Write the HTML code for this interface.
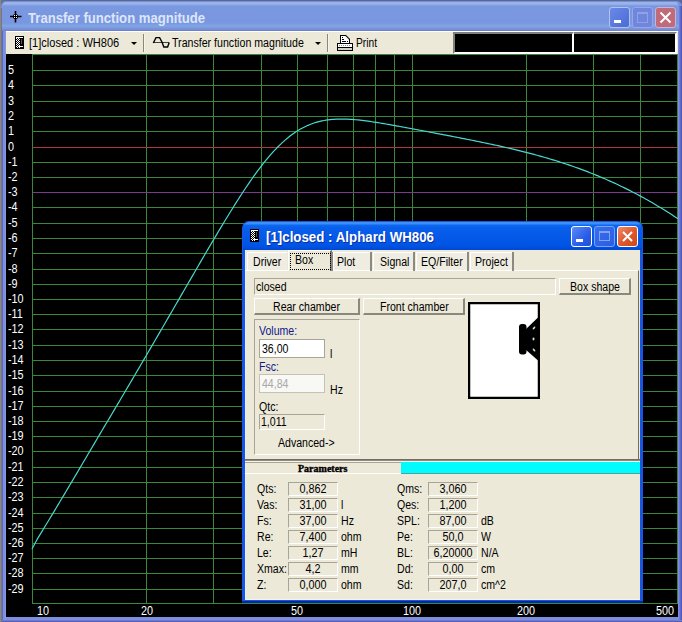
<!DOCTYPE html>
<html><head><meta charset="utf-8">
<style>
*{box-sizing:border-box}
body{margin:0;width:682px;height:622px;position:relative;overflow:hidden;background:#8a8680;font-family:"Liberation Sans", sans-serif;font-size:11px;color:#000}
.a{position:absolute}
.yl{position:absolute;left:8px;width:24px;text-align:left;color:#fff;font-size:12px;line-height:14px;transform:scaleX(0.9);transform-origin:0 0}
.xl{position:absolute;top:604px;width:40px;text-align:center;color:#fff;font-size:12px;line-height:14px;transform:scaleX(0.9)}
.t{position:absolute;white-space:pre;line-height:13px}
</style></head><body>
<!-- main window frame -->
<div class="a" style="left:1px;top:0;width:681px;height:1px;background:#5a6a98"></div><div class="a" style="left:1px;top:0;width:8px;height:8px;background:#6a7294"></div>
<div class="a" style="left:1px;top:0px;width:681px;height:622px;background:#7b8fe0;border-radius:6px 6px 0 0;border-top:1px solid #56699a"></div>
<div class="a" style="left:1px;top:8px;width:1px;height:614px;background:#747490"></div><div class="a" style="left:2px;top:8px;width:1px;height:614px;background:#6068b8"></div><div class="a" style="left:5px;top:31px;width:1px;height:591px;background:#8898e0"></div>
<div class="a" style="left:681px;top:6px;width:1px;height:616px;background:#5058b8"></div>
<div class="a" style="left:680px;top:6px;width:1px;height:616px;background:#6068c8"></div>
<div class="a" style="left:679px;top:6px;width:1px;height:616px;background:#7078d8"></div>
<div class="a" style="left:674px;top:0;width:8px;height:6px;background:#5a6490;z-index:-1"></div>
<div class="a" style="left:2px;top:621px;width:680px;height:1px;background:#5a60b0"></div>
<div class="a" style="left:2px;top:620px;width:680px;height:1px;background:#7078d0"></div>
<div class="a" style="left:2px;top:1px;width:677px;height:30px;border-radius:6px 6px 0 0;background:linear-gradient(#7c8ec8 0px,#7c8ec8 1px,#98b4ee 1px,#98b4ee 3px,#7a98e0 5px,#7996e0 22px,#80a6e4 25px,#7a92da 28px,#6a80c8 30px)"></div>
<div class="t" style="left:28px;top:10px;font-size:14px;font-weight:bold;color:#dce6f8;line-height:16px;transform:scaleX(0.937);transform-origin:0 0">Transfer function magnitude</div>
<!-- toolbar -->
<div class="a" style="left:6px;top:31px;width:672px;height:23px;background:#ece9d8;border-top:1px solid #fff"></div>
<!-- plot black -->
<div class="a" style="left:6px;top:54px;width:672px;height:563px;background:#000"></div>
<svg class="a" style="left:0;top:0" width="682" height="622" viewBox="0 0 682 622">
<rect x="146" y="54" width="1" height="549" fill="#3a863a"/><rect x="213" y="54" width="1" height="549" fill="#3a863a"/><rect x="261" y="54" width="1" height="549" fill="#3a863a"/><rect x="297" y="54" width="1" height="549" fill="#3a863a"/><rect x="327" y="54" width="1" height="549" fill="#3a863a"/><rect x="353" y="54" width="1" height="549" fill="#3a863a"/><rect x="375" y="54" width="1" height="549" fill="#3a863a"/><rect x="394" y="54" width="1" height="549" fill="#3a863a"/><rect x="412" y="54" width="1" height="549" fill="#3a863a"/><rect x="526" y="54" width="1" height="549" fill="#3a863a"/><rect x="593" y="54" width="1" height="549" fill="#3a863a"/><rect x="640" y="54" width="1" height="549" fill="#3a863a"/><rect x="32" y="70" width="646" height="1" fill="#3a863a"/><rect x="32" y="85" width="646" height="1" fill="#3a863a"/><rect x="32" y="101" width="646" height="1" fill="#3a863a"/><rect x="32" y="116" width="646" height="1" fill="#3a863a"/><rect x="32" y="131" width="646" height="1" fill="#3a863a"/><rect x="32" y="147" width="646" height="1" fill="#b03838"/><rect x="32" y="162" width="646" height="1" fill="#3a863a"/><rect x="32" y="177" width="646" height="1" fill="#3a863a"/><rect x="32" y="192" width="646" height="1" fill="#7e3890"/><rect x="32" y="207" width="646" height="1" fill="#3a863a"/><rect x="32" y="223" width="646" height="1" fill="#3a863a"/><rect x="32" y="238" width="646" height="1" fill="#3a863a"/><rect x="32" y="253" width="646" height="1" fill="#3a863a"/><rect x="32" y="269" width="646" height="1" fill="#3a863a"/><rect x="32" y="284" width="646" height="1" fill="#3a863a"/><rect x="32" y="299" width="646" height="1" fill="#3a863a"/><rect x="32" y="314" width="646" height="1" fill="#3a863a"/><rect x="32" y="329" width="646" height="1" fill="#3a863a"/><rect x="32" y="345" width="646" height="1" fill="#3a863a"/><rect x="32" y="360" width="646" height="1" fill="#3a863a"/><rect x="32" y="375" width="646" height="1" fill="#3a863a"/><rect x="32" y="391" width="646" height="1" fill="#3a863a"/><rect x="32" y="406" width="646" height="1" fill="#3a863a"/><rect x="32" y="421" width="646" height="1" fill="#3a863a"/><rect x="32" y="436" width="646" height="1" fill="#3a863a"/><rect x="32" y="451" width="646" height="1" fill="#3a863a"/><rect x="32" y="467" width="646" height="1" fill="#3a863a"/><rect x="32" y="482" width="646" height="1" fill="#3a863a"/><rect x="32" y="497" width="646" height="1" fill="#3a863a"/><rect x="32" y="513" width="646" height="1" fill="#3a863a"/><rect x="32" y="528" width="646" height="1" fill="#3a863a"/><rect x="32" y="543" width="646" height="1" fill="#3a863a"/><rect x="32" y="558" width="646" height="1" fill="#3a863a"/><rect x="32" y="573" width="646" height="1" fill="#3a863a"/><rect x="32" y="589" width="646" height="1" fill="#3a863a"/><rect x="32" y="54" width="646" height="1" fill="#3a863a"/><rect x="32" y="603" width="646" height="1" fill="#3a863a"/><rect x="32" y="54" width="1" height="550" fill="#3a863a"/><rect x="677" y="54" width="1" height="550" fill="#3a863a"/>
<polyline points="32.0,548.96 33.0,547.08 34.0,545.20 36.0,541.44 38.0,537.92 40.0,534.63 42.0,531.35 44.0,528.06 46.0,524.77 48.0,521.48 50.0,518.19 52.0,514.90 54.0,511.60 56.0,508.27 58.0,504.92 60.0,501.56 62.0,498.20 64.0,494.83 66.0,491.47 68.0,488.10 70.0,484.73 72.0,481.35 74.0,477.98 76.0,474.60 78.0,471.22 80.0,467.84 82.0,464.46 84.0,461.07 86.0,457.68 88.0,454.29 90.0,450.89 92.0,447.50 94.0,444.10 96.0,440.69 98.0,437.29 100.0,433.88 102.0,430.52 104.0,427.17 106.0,423.81 108.0,420.45 110.0,417.08 112.0,413.71 114.0,410.34 116.0,406.96 118.0,403.59 120.0,400.21 122.0,396.82 124.0,393.43 126.0,390.04 128.0,386.65 130.0,383.25 132.0,379.85 134.0,376.45 136.0,373.04 138.0,369.63 140.0,366.22 142.0,362.80 144.0,359.38 146.0,355.96 148.0,352.53 150.0,349.10 152.0,345.67 154.0,342.23 156.0,338.80 158.0,335.36 160.0,331.91 162.0,328.47 164.0,325.02 166.0,321.57 168.0,318.12 170.0,314.66 172.0,311.21 174.0,307.75 176.0,304.29 178.0,300.84 180.0,297.38 182.0,293.92 184.0,290.46 186.0,287.00 188.0,283.54 190.0,280.09 192.0,276.63 194.0,273.18 196.0,269.74 198.0,266.29 200.0,262.85 202.0,259.42 204.0,255.99 206.0,252.57 208.0,249.15 210.0,245.75 212.0,242.35 214.0,238.97 216.0,235.60 218.0,232.24 220.0,228.90 222.0,225.57 224.0,222.26 226.0,218.97 228.0,215.69 230.0,212.45 232.0,209.22 234.0,206.02 236.0,202.86 238.0,199.72 240.0,196.61 242.0,193.53 244.0,190.50 246.0,187.50 248.0,184.54 250.0,181.63 252.0,178.77 254.0,175.95 256.0,173.18 258.0,170.47 260.0,167.81 262.0,165.21 264.0,162.67 266.0,160.20 268.0,157.79 270.0,155.44 272.0,153.17 274.0,150.97 276.0,148.84 278.0,146.79 280.0,144.81 282.0,142.90 284.0,141.08 286.0,139.34 288.0,137.67 290.0,136.08 292.0,134.58 294.0,133.15 296.0,131.80 298.0,130.53 300.0,129.34 302.0,128.22 304.0,127.18 306.0,126.22 308.0,125.32 310.0,124.50 312.0,123.74 314.0,123.05 316.0,122.42 318.0,121.86 320.0,121.35 322.0,120.91 324.0,120.51 326.0,120.17 328.0,119.88 330.0,119.64 332.0,119.44 334.0,119.29 336.0,119.17 338.0,119.09 340.0,119.05 342.0,119.04 344.0,119.07 346.0,119.12 348.0,119.20 350.0,119.31 352.0,119.44 354.0,119.60 356.0,119.77 358.0,119.96 360.0,120.18 362.0,120.40 364.0,120.65 366.0,120.90 368.0,121.17 370.0,121.45 372.0,121.74 374.0,122.05 376.0,122.36 378.0,122.67 380.0,123.00 382.0,123.33 384.0,123.67 386.0,124.01 388.0,124.36 390.0,124.71 392.0,125.07 394.0,125.42 396.0,125.79 398.0,126.15 400.0,126.52 402.0,126.89 404.0,127.26 406.0,127.63 408.0,128.00 410.0,128.37 412.0,128.75 414.0,129.12 416.0,129.50 418.0,129.88 420.0,130.25 422.0,130.63 424.0,131.01 426.0,131.39 428.0,131.77 430.0,132.15 432.0,132.53 434.0,132.91 436.0,133.29 438.0,133.67 440.0,134.05 442.0,134.43 444.0,134.81 446.0,135.19 448.0,135.58 450.0,135.96 452.0,136.35 454.0,136.73 456.0,137.12 458.0,137.51 460.0,137.90 462.0,138.29 464.0,138.68 466.0,139.08 468.0,139.47 470.0,139.87 472.0,140.27 474.0,140.67 476.0,141.08 478.0,141.48 480.0,141.89 482.0,142.30 484.0,142.72 486.0,143.14 488.0,143.56 490.0,143.98 492.0,144.41 494.0,144.84 496.0,145.27 498.0,145.71 500.0,146.16 502.0,146.60 504.0,147.05 506.0,147.51 508.0,147.97 510.0,148.43 512.0,148.90 514.0,149.38 516.0,149.86 518.0,150.34 520.0,150.84 522.0,151.33 524.0,151.83 526.0,152.34 528.0,152.86 530.0,153.38 532.0,153.91 534.0,154.44 536.0,154.98 538.0,155.53 540.0,156.09 542.0,156.65 544.0,157.22 546.0,157.79 548.0,158.38 550.0,158.97 552.0,159.57 554.0,160.18 556.0,160.80 558.0,161.42 560.0,162.06 562.0,162.70 564.0,163.35 566.0,164.01 568.0,164.68 570.0,165.36 572.0,166.05 574.0,166.75 576.0,167.46 578.0,168.17 580.0,168.90 582.0,169.64 584.0,170.39 586.0,171.14 588.0,171.91 590.0,172.69 592.0,173.48 594.0,174.28 596.0,175.09 598.0,175.91 600.0,176.75 602.0,177.59 604.0,178.45 606.0,179.31 608.0,180.19 610.0,181.08 612.0,181.98 614.0,182.90 616.0,183.82 618.0,184.76 620.0,185.71 622.0,186.67 624.0,187.64 626.0,188.63 628.0,189.63 630.0,190.64 632.0,191.66 634.0,192.70 636.0,193.75 638.0,194.81 640.0,195.88 642.0,196.97 644.0,198.07 646.0,199.18 648.0,200.31 650.0,201.45 652.0,202.60 654.0,203.76 656.0,204.94 658.0,206.14 660.0,207.34 662.0,208.56 664.0,209.79 666.0,211.04 668.0,212.29 670.0,213.57 672.0,214.85 674.0,216.15 676.0,217.47 678.0,218.79" fill="none" stroke="#4ad8d0" stroke-width="1.2"/>
</svg>
<div class="yl" style="top:63px">5</div><div class="yl" style="top:78px">4</div><div class="yl" style="top:94px">3</div><div class="yl" style="top:109px">2</div><div class="yl" style="top:124px">1</div><div class="yl" style="top:140px">0</div><div class="yl" style="top:155px">-1</div><div class="yl" style="top:170px">-2</div><div class="yl" style="top:185px">-3</div><div class="yl" style="top:200px">-4</div><div class="yl" style="top:216px">-5</div><div class="yl" style="top:231px">-6</div><div class="yl" style="top:246px">-7</div><div class="yl" style="top:262px">-8</div><div class="yl" style="top:277px">-9</div><div class="yl" style="top:292px">-10</div><div class="yl" style="top:307px">-11</div><div class="yl" style="top:322px">-12</div><div class="yl" style="top:338px">-13</div><div class="yl" style="top:353px">-14</div><div class="yl" style="top:368px">-15</div><div class="yl" style="top:384px">-16</div><div class="yl" style="top:399px">-17</div><div class="yl" style="top:414px">-18</div><div class="yl" style="top:429px">-19</div><div class="yl" style="top:444px">-20</div><div class="yl" style="top:460px">-21</div><div class="yl" style="top:475px">-22</div><div class="yl" style="top:490px">-23</div><div class="yl" style="top:506px">-24</div><div class="yl" style="top:521px">-25</div><div class="yl" style="top:536px">-26</div><div class="yl" style="top:551px">-27</div><div class="yl" style="top:566px">-28</div><div class="yl" style="top:582px">-29</div>
<div class="xl" style="left:23px">10</div><div class="xl" style="left:127px">20</div><div class="xl" style="left:277px">50</div><div class="xl" style="left:392px">100</div><div class="xl" style="left:506px">200</div><div class="xl" style="left:645px">500</div>

<svg class="a" style="left:9px;top:10px" width="14" height="14" viewBox="0 0 14 14">
<path d="M6.5 1V12.5M1 6.5H12.5" stroke="#000" stroke-width="1.6"/>
<circle cx="6.5" cy="6.5" r="2.6" fill="#000"/><rect x="5" y="5" width="1" height="1" fill="#fff"/><rect x="7" y="7" width="1" height="1" fill="#fff"/><rect x="7" y="5" width="1" height="1" fill="#fff"/><rect x="5" y="7" width="1" height="1" fill="#fff"/></svg>
<div class="a" style="left:609px;top:7px;width:21px;height:21px;border:1px solid #b4c2f2;border-radius:3px;background:linear-gradient(135deg,#6a8ae8,#4a6ad6)"></div>
<div class="a" style="left:614px;top:20px;width:7px;height:3px;background:#fff"></div>
<div class="a" style="left:632px;top:7px;width:21px;height:21px;border:1px solid #97a8ea;border-radius:3px;background:#6f86dc"></div>
<div class="a" style="left:637px;top:12px;width:11px;height:11px;border:1px solid #8fa2e6;border-top-width:2px"></div>
<div class="a" style="left:655px;top:7px;width:21px;height:21px;border:1px solid #c8b4d8;border-radius:3px;background:#c06a7a"></div>
<svg class="a" style="left:659px;top:11px" width="13" height="13" viewBox="0 0 13 13"><path d="M1.5 1.5L11.5 11.5M11.5 1.5L1.5 11.5" stroke="#fff" stroke-width="2"/></svg>
<svg class="a" style="left:15px;top:36px" width="9" height="13" viewBox="0 0 9 13">
<defs><pattern id="chk15" width="2" height="2" patternUnits="userSpaceOnUse"><rect width="2" height="2" fill="#fff"/><rect width="1" height="1" fill="#000"/><rect x="1" y="1" width="1" height="1" fill="#000"/></pattern></defs>
<rect width="9" height="13" fill="#000"/><rect x="1" y="1" width="4" height="11" fill="url(#chk15)"/><rect x="1" y="1" width="7" height="1" fill="#fff"/><rect x="4" y="10" width="4" height="1" fill="#fff"/><rect x="6" y="3" width="1" height="5" fill="#555"/></svg>
<div class="t" style="left:29px;top:37px;font-size:12px;color:#000;font-weight:normal;transform:scaleX(0.92);transform-origin:0 0">[1]closed : WH806</div>
<div class="a" style="left:131px;top:42px;width:0;height:0;border-left:3px solid transparent;border-right:3px solid transparent;border-top:3px solid #000"></div>
<div class="a" style="left:143px;top:34px;width:1px;height:18px;background:#8a887c"></div><div class="a" style="left:144px;top:34px;width:1px;height:18px;background:#f6f4ec"></div>
<svg class="a" style="left:152px;top:36px" width="18" height="13" viewBox="0 0 18 13">
<rect x="1" y="6" width="16" height="1" fill="#404040"/>
<path d="M1.3 7L4 1.6L7.6 1.6L10.2 6.5L11.8 11L15.6 11L17.2 6.5" fill="none" stroke="#000" stroke-width="1.4"/></svg>
<div class="t" style="left:172px;top:37px;font-size:12px;color:#000;font-weight:normal;transform:scaleX(0.885);transform-origin:0 0">Transfer function magnitude</div>
<div class="a" style="left:315px;top:42px;width:0;height:0;border-left:3px solid transparent;border-right:3px solid transparent;border-top:3px solid #000"></div>
<div class="a" style="left:327px;top:34px;width:1px;height:18px;background:#8a887c"></div><div class="a" style="left:328px;top:34px;width:1px;height:18px;background:#f6f4ec"></div>
<svg class="a" style="left:337px;top:35px" width="16" height="16" viewBox="0 0 16 16">
<path d="M3 0H9L13 4V8H3Z" fill="#000"/><path d="M4 1H8.5L12 4.5V8H4Z" fill="#fff"/>
<rect x="5" y="2" width="1" height="1" fill="#000"/><rect x="5" y="4" width="2" height="1" fill="#000"/><rect x="5" y="6" width="4" height="1" fill="#000"/><rect x="10" y="6" width="1" height="1" fill="#000"/>
<rect x="0" y="8" width="16" height="8" fill="#000"/><rect x="1" y="9" width="14" height="3" fill="#fff"/>
<rect x="2" y="10" width="1" height="1" fill="#888"/><rect x="4" y="10" width="1" height="1" fill="#888"/><rect x="6" y="10" width="1" height="1" fill="#888"/><rect x="8" y="10" width="1" height="1" fill="#888"/><rect x="10" y="10" width="1" height="1" fill="#888"/><rect x="12" y="10" width="1" height="1" fill="#888"/>
<rect x="1" y="13" width="14" height="2" fill="#d0d0c8"/></svg>
<div class="t" style="left:356px;top:37px;font-size:12px;color:#000;font-weight:normal;transform:scaleX(0.85);transform-origin:0 0">Print</div>
<div class="a" style="left:453px;top:32px;width:121px;height:22px;background:#000;border-top:2px solid #808080;border-left:2px solid #808080;border-bottom:2px solid #fff;border-right:2px solid #fff"></div>
<div class="a" style="left:574px;top:32px;width:103px;height:22px;background:#000;border-top:2px solid #808080;border-bottom:2px solid #fff;border-right:2px solid #fff"></div>
<div class="a" style="left:242px;top:221px;width:401px;height:382px;background:#1656e2;border-radius:7px 7px 0 0"></div><div class="a" style="left:242px;top:601px;width:401px;height:2px;background:#0426a8"></div>
<div class="a" style="left:243px;top:222px;width:399px;height:28px;border-radius:6px 6px 0 0;background:linear-gradient(#3d8ef8 0px,#3d8ef8 2px,#0a6af0 3px,#0a5eec 6px,#0054e4 24px,#0046d4 28px)"></div>
<div class="a" style="left:245px;top:250px;width:395px;height:350px;background:#ece9d8;border-bottom:1px solid #f4f4f0"></div>
<div class="a" style="left:245px;top:250px;width:1px;height:350px;background:#e4f0fc"></div>
<svg class="a" style="left:250px;top:229px" width="9" height="13" viewBox="0 0 9 13">
<defs><pattern id="chk250" width="2" height="2" patternUnits="userSpaceOnUse"><rect width="2" height="2" fill="#fff"/><rect width="1" height="1" fill="#000"/><rect x="1" y="1" width="1" height="1" fill="#000"/></pattern></defs>
<rect width="9" height="13" fill="#000"/><rect x="1" y="1" width="4" height="11" fill="url(#chk250)"/><rect x="1" y="1" width="7" height="1" fill="#fff"/><rect x="4" y="10" width="4" height="1" fill="#fff"/><rect x="6" y="3" width="1" height="5" fill="#555"/></svg>
<div class="t" style="left:266px;top:229px;font-size:14px;color:#fff;font-weight:bold;line-height:17px;transform:scaleX(0.95);transform-origin:0 0;text-shadow:1px 1px 0 #0a2ea0">[1]closed : Alphard WH806</div>
<div class="a" style="left:571px;top:226px;width:21px;height:21px;border:1px solid #fff;border-radius:3px;background:linear-gradient(135deg,#5a8cf8,#2a5ee8 60%,#2050d8)"></div>
<div class="a" style="left:576px;top:239px;width:7px;height:3px;background:#fff"></div>
<div class="a" style="left:594px;top:226px;width:21px;height:21px;border:1px solid #7ea2f4;border-radius:3px;background:linear-gradient(135deg,#3a6ef0,#2a5ee0)"></div>
<div class="a" style="left:599px;top:231px;width:11px;height:10px;border:1px solid #7ea2f4;border-top-width:2px"></div>
<div class="a" style="left:617px;top:226px;width:21px;height:21px;border:1px solid #fff;border-radius:3px;background:linear-gradient(135deg,#f08a6a,#e05a30 50%,#c84818)"></div>
<svg class="a" style="left:621px;top:230px" width="13" height="13" viewBox="0 0 13 13"><path d="M2 2L11 11M11 2L2 11" stroke="#fff" stroke-width="2"/></svg>
<div class="a" style="left:245px;top:270px;width:394px;height:190px;border-top:1px solid #fff;border-right:1px solid #716f64"></div>
<div class="a" style="left:288px;top:250px;width:44px;height:21px;background:#ece9d8;border-top:1px solid #fff;border-left:1px solid #fff;border-right:2px solid #716f64"></div>
<div class="a" style="left:290px;top:253px;width:41px;height:17px;border:1px dotted #000"></div>
<div class="a" style="left:247px;top:252px;width:40px;height:18px;border-top:1px solid #fff;border-left:1px solid #fff;background:#efede2"></div>
<div class="a" style="left:333px;top:252px;width:37px;height:18px;border-top:1px solid #fff;border-left:1px solid #fff;background:#efede2"></div>
<div class="a" style="left:373px;top:252px;width:40px;height:18px;border-top:1px solid #fff;border-left:1px solid #fff;background:#efede2"></div>
<div class="a" style="left:416px;top:252px;width:51px;height:18px;border-top:1px solid #fff;border-left:1px solid #fff;background:#efede2"></div>
<div class="a" style="left:470px;top:252px;width:42px;height:18px;border-top:1px solid #fff;border-left:1px solid #fff;background:#efede2"></div>
<div class="a" style="left:331px;top:252px;width:2px;height:19px;background:#8c8a80"></div>
<div class="a" style="left:370px;top:252px;width:2px;height:19px;background:#8c8a80"></div>
<div class="a" style="left:413px;top:252px;width:2px;height:19px;background:#8c8a80"></div>
<div class="a" style="left:467px;top:252px;width:2px;height:19px;background:#8c8a80"></div>
<div class="a" style="left:512px;top:252px;width:2px;height:19px;background:#8c8a80"></div>
<div class="t" style="left:253px;top:256px;font-size:12px;color:#000;font-weight:normal;transform:scaleX(0.88);transform-origin:0 0;">Driver</div>
<div class="t" style="left:295px;top:254px;font-size:12px;color:#000;font-weight:normal;transform:scaleX(0.88);transform-origin:0 0;">Box</div>
<div class="t" style="left:337px;top:256px;font-size:12px;color:#000;font-weight:normal;transform:scaleX(0.88);transform-origin:0 0;">Plot</div>
<div class="t" style="left:380px;top:256px;font-size:12px;color:#000;font-weight:normal;transform:scaleX(0.88);transform-origin:0 0;">Signal</div>
<div class="t" style="left:421px;top:256px;font-size:12px;color:#000;font-weight:normal;transform:scaleX(0.88);transform-origin:0 0;">EQ/Filter</div>
<div class="t" style="left:475px;top:256px;font-size:12px;color:#000;font-weight:normal;transform:scaleX(0.88);transform-origin:0 0;">Project</div>
<div class="a" style="left:254px;top:278px;width:302px;height:17px;border-top:1px solid #a8a598;border-left:1px solid #a8a598;border-bottom:1px solid #fff;border-right:1px solid #fff"></div>
<div class="t" style="left:256px;top:281px;font-size:12px;color:#000;font-weight:normal;transform:scaleX(0.88);transform-origin:0 0;">closed</div>
<div class="a" style="left:559px;top:278px;width:72px;height:17px;background:#ece9d8;border-top:1px solid #fff;border-left:1px solid #fff;border-bottom:2px solid #8a887c;border-right:2px solid #8a887c"></div><div class="t" style="left:570px;top:281px;font-size:12px;color:#000;font-weight:normal;transform:scaleX(0.88);transform-origin:0 0;">Box shape</div>
<div class="a" style="left:254px;top:298px;width:106px;height:17px;background:#ece9d8;border-top:1px solid #fff;border-left:1px solid #fff;border-bottom:2px solid #8a887c;border-right:2px solid #8a887c"></div><div class="t" style="left:273px;top:301px;font-size:12px;color:#000;font-weight:normal;transform:scaleX(0.88);transform-origin:0 0;">Rear chamber</div>
<div class="a" style="left:363px;top:298px;width:102px;height:17px;background:#ece9d8;border-top:1px solid #fff;border-left:1px solid #fff;border-bottom:2px solid #8a887c;border-right:2px solid #8a887c"></div><div class="t" style="left:380px;top:301px;font-size:12px;color:#000;font-weight:normal;transform:scaleX(0.88);transform-origin:0 0;">Front chamber</div>
<div class="a" style="left:254px;top:319px;width:106px;height:136px;border-top:1px solid #a8a598;border-left:1px solid #a8a598;border-bottom:1px solid #fff;border-right:1px solid #fff"></div>
<div class="t" style="left:259px;top:325px;font-size:12px;color:#10188a;font-weight:normal;transform:scaleX(0.88);transform-origin:0 0;">Volume:</div>
<div class="a" style="left:259px;top:339px;width:66px;height:19px;background:#fff;border:1px solid #a8a598"></div>
<div class="t" style="left:262px;top:343px;font-size:12px;color:#000;font-weight:normal;transform:scaleX(0.88);transform-origin:0 0;">36,00</div>
<div class="t" style="left:330px;top:348px;font-size:12px;color:#000;font-weight:normal;transform:scaleX(0.88);transform-origin:0 0;">l</div>
<div class="t" style="left:259px;top:361px;font-size:12px;color:#10188a;font-weight:normal;transform:scaleX(0.88);transform-origin:0 0;">Fsc:</div>
<div class="a" style="left:259px;top:374px;width:66px;height:19px;background:#f8f8f4;border:1px solid #c4c2b8"></div>
<div class="t" style="left:262px;top:378px;font-size:12px;color:#a8a8a8;font-weight:normal;transform:scaleX(0.88);transform-origin:0 0;">44,84</div>
<div class="t" style="left:330px;top:384px;font-size:12px;color:#000;font-weight:normal;transform:scaleX(0.88);transform-origin:0 0;">Hz</div>
<div class="t" style="left:259px;top:401px;font-size:12px;color:#000;font-weight:normal;transform:scaleX(0.88);transform-origin:0 0;">Qtc:</div>
<div class="a" style="left:259px;top:414px;width:66px;height:16px;background:#ece9d8;border-top:1px solid #a8a598;border-left:1px solid #a8a598;border-bottom:1px solid #fff;border-right:1px solid #fff"></div>
<div class="t" style="left:261px;top:416px;font-size:12px;color:#000;font-weight:normal;transform:scaleX(0.88);transform-origin:0 0;">1,011</div>
<div class="t" style="left:278px;top:437px;font-size:12px;color:#000;font-weight:normal;transform:scaleX(0.88);transform-origin:0 0;">Advanced-&gt;</div>
<svg class="a" style="left:468px;top:302px" width="72" height="97" viewBox="0 0 72 97">
<rect x="1" y="1" width="70" height="95" fill="#fff" stroke="#000" stroke-width="2.5"/>
<rect x="51" y="22" width="7.5" height="30.5" rx="3" fill="#000"/>
<path d="M57 28 L70 15.5 L70 58.5 L57 47 Z" fill="#000"/>
<ellipse cx="66" cy="26" rx="0.9" ry="1.8" transform="rotate(40 66 26)" fill="#ddd"/><ellipse cx="65.5" cy="37" rx="1" ry="1.4" fill="#ddd"/><ellipse cx="66" cy="48" rx="0.9" ry="1.8" transform="rotate(-40 66 48)" fill="#ddd"/>
</svg>
<div class="a" style="left:245px;top:459px;width:395px;height:1px;background:#716f64"></div>
<div class="a" style="left:245px;top:460px;width:395px;height:1px;background:#8c8a7e"></div>
<div class="a" style="left:245px;top:461px;width:395px;height:1px;background:#f8f6ec"></div>
<div class="a" style="left:245px;top:462px;width:156px;height:1px;background:#a8a598"></div>
<div class="a" style="left:245px;top:473px;width:156px;height:1px;background:#fff"></div>
<div class="a" style="left:401px;top:462px;width:239px;height:12px;background:#00fcfc;border-bottom:1px solid #50a0a0"></div>
<div class="t" style="left:298px;top:462px;font-size:10px;color:#000;font-weight:bold;font-family:'Liberation Serif',serif;-webkit-text-stroke:0.35px #000">Parameters</div>
<div class="t" style="left:257px;top:483px;font-size:12px;color:#000;font-weight:normal;transform:scaleX(0.88);transform-origin:0 0;">Qts:</div>
<div class="a" style="left:288px;top:482px;width:50px;height:14px;background:#ece9d8;border-top:1px solid #a8a598;border-left:1px solid #a8a598;border-bottom:1px solid #fff;border-right:1px solid #fff"></div>
<div class="t" style="left:288px;top:483px;width:50px;text-align:center;font-size:12px;transform:scaleX(0.9)">0,862</div>
<div class="t" style="left:397px;top:483px;font-size:12px;color:#000;font-weight:normal;transform:scaleX(0.88);transform-origin:0 0;">Qms:</div>
<div class="a" style="left:428px;top:482px;width:50px;height:14px;background:#ece9d8;border-top:1px solid #a8a598;border-left:1px solid #a8a598;border-bottom:1px solid #fff;border-right:1px solid #fff"></div>
<div class="t" style="left:428px;top:483px;width:50px;text-align:center;font-size:12px;transform:scaleX(0.9)">3,060</div>
<div class="t" style="left:257px;top:499px;font-size:12px;color:#000;font-weight:normal;transform:scaleX(0.88);transform-origin:0 0;">Vas:</div>
<div class="a" style="left:288px;top:498px;width:50px;height:14px;background:#ece9d8;border-top:1px solid #a8a598;border-left:1px solid #a8a598;border-bottom:1px solid #fff;border-right:1px solid #fff"></div>
<div class="t" style="left:288px;top:499px;width:50px;text-align:center;font-size:12px;transform:scaleX(0.9)">31,00</div>
<div class="t" style="left:341px;top:499px;font-size:12px;color:#000;font-weight:normal;transform:scaleX(0.88);transform-origin:0 0;">l</div>
<div class="t" style="left:397px;top:499px;font-size:12px;color:#000;font-weight:normal;transform:scaleX(0.88);transform-origin:0 0;">Qes:</div>
<div class="a" style="left:428px;top:498px;width:50px;height:14px;background:#ece9d8;border-top:1px solid #a8a598;border-left:1px solid #a8a598;border-bottom:1px solid #fff;border-right:1px solid #fff"></div>
<div class="t" style="left:428px;top:499px;width:50px;text-align:center;font-size:12px;transform:scaleX(0.9)">1,200</div>
<div class="t" style="left:257px;top:515px;font-size:12px;color:#000;font-weight:normal;transform:scaleX(0.88);transform-origin:0 0;">Fs:</div>
<div class="a" style="left:288px;top:514px;width:50px;height:14px;background:#ece9d8;border-top:1px solid #a8a598;border-left:1px solid #a8a598;border-bottom:1px solid #fff;border-right:1px solid #fff"></div>
<div class="t" style="left:288px;top:515px;width:50px;text-align:center;font-size:12px;transform:scaleX(0.9)">37,00</div>
<div class="t" style="left:341px;top:515px;font-size:12px;color:#000;font-weight:normal;transform:scaleX(0.88);transform-origin:0 0;">Hz</div>
<div class="t" style="left:397px;top:515px;font-size:12px;color:#000;font-weight:normal;transform:scaleX(0.88);transform-origin:0 0;">SPL:</div>
<div class="a" style="left:428px;top:514px;width:50px;height:14px;background:#ece9d8;border-top:1px solid #a8a598;border-left:1px solid #a8a598;border-bottom:1px solid #fff;border-right:1px solid #fff"></div>
<div class="t" style="left:428px;top:515px;width:50px;text-align:center;font-size:12px;transform:scaleX(0.9)">87,00</div>
<div class="t" style="left:481px;top:515px;font-size:12px;color:#000;font-weight:normal;transform:scaleX(0.88);transform-origin:0 0;">dB</div>
<div class="t" style="left:257px;top:531px;font-size:12px;color:#000;font-weight:normal;transform:scaleX(0.88);transform-origin:0 0;">Re:</div>
<div class="a" style="left:288px;top:530px;width:50px;height:14px;background:#ece9d8;border-top:1px solid #a8a598;border-left:1px solid #a8a598;border-bottom:1px solid #fff;border-right:1px solid #fff"></div>
<div class="t" style="left:288px;top:531px;width:50px;text-align:center;font-size:12px;transform:scaleX(0.9)">7,400</div>
<div class="t" style="left:341px;top:531px;font-size:12px;color:#000;font-weight:normal;transform:scaleX(0.88);transform-origin:0 0;">ohm</div>
<div class="t" style="left:397px;top:531px;font-size:12px;color:#000;font-weight:normal;transform:scaleX(0.88);transform-origin:0 0;">Pe:</div>
<div class="a" style="left:428px;top:530px;width:50px;height:14px;background:#ece9d8;border-top:1px solid #a8a598;border-left:1px solid #a8a598;border-bottom:1px solid #fff;border-right:1px solid #fff"></div>
<div class="t" style="left:428px;top:531px;width:50px;text-align:center;font-size:12px;transform:scaleX(0.9)">50,0</div>
<div class="t" style="left:481px;top:531px;font-size:12px;color:#000;font-weight:normal;transform:scaleX(0.88);transform-origin:0 0;">W</div>
<div class="t" style="left:257px;top:547px;font-size:12px;color:#000;font-weight:normal;transform:scaleX(0.88);transform-origin:0 0;">Le:</div>
<div class="a" style="left:288px;top:546px;width:50px;height:14px;background:#ece9d8;border-top:1px solid #a8a598;border-left:1px solid #a8a598;border-bottom:1px solid #fff;border-right:1px solid #fff"></div>
<div class="t" style="left:288px;top:547px;width:50px;text-align:center;font-size:12px;transform:scaleX(0.9)">1,27</div>
<div class="t" style="left:341px;top:547px;font-size:12px;color:#000;font-weight:normal;transform:scaleX(0.88);transform-origin:0 0;">mH</div>
<div class="t" style="left:397px;top:547px;font-size:12px;color:#000;font-weight:normal;transform:scaleX(0.88);transform-origin:0 0;">BL:</div>
<div class="a" style="left:428px;top:546px;width:50px;height:14px;background:#ece9d8;border-top:1px solid #a8a598;border-left:1px solid #a8a598;border-bottom:1px solid #fff;border-right:1px solid #fff"></div>
<div class="t" style="left:428px;top:547px;width:50px;text-align:center;font-size:12px;transform:scaleX(0.9)">6,20000</div>
<div class="t" style="left:481px;top:547px;font-size:12px;color:#000;font-weight:normal;transform:scaleX(0.88);transform-origin:0 0;">N/A</div>
<div class="t" style="left:257px;top:563px;font-size:12px;color:#000;font-weight:normal;transform:scaleX(0.88);transform-origin:0 0;">Xmax:</div>
<div class="a" style="left:288px;top:562px;width:50px;height:14px;background:#ece9d8;border-top:1px solid #a8a598;border-left:1px solid #a8a598;border-bottom:1px solid #fff;border-right:1px solid #fff"></div>
<div class="t" style="left:288px;top:563px;width:50px;text-align:center;font-size:12px;transform:scaleX(0.9)">4,2</div>
<div class="t" style="left:341px;top:563px;font-size:12px;color:#000;font-weight:normal;transform:scaleX(0.88);transform-origin:0 0;">mm</div>
<div class="t" style="left:397px;top:563px;font-size:12px;color:#000;font-weight:normal;transform:scaleX(0.88);transform-origin:0 0;">Dd:</div>
<div class="a" style="left:428px;top:562px;width:50px;height:14px;background:#ece9d8;border-top:1px solid #a8a598;border-left:1px solid #a8a598;border-bottom:1px solid #fff;border-right:1px solid #fff"></div>
<div class="t" style="left:428px;top:563px;width:50px;text-align:center;font-size:12px;transform:scaleX(0.9)">0,00</div>
<div class="t" style="left:481px;top:563px;font-size:12px;color:#000;font-weight:normal;transform:scaleX(0.88);transform-origin:0 0;">cm</div>
<div class="t" style="left:257px;top:579px;font-size:12px;color:#000;font-weight:normal;transform:scaleX(0.88);transform-origin:0 0;">Z:</div>
<div class="a" style="left:288px;top:578px;width:50px;height:14px;background:#ece9d8;border-top:1px solid #a8a598;border-left:1px solid #a8a598;border-bottom:1px solid #fff;border-right:1px solid #fff"></div>
<div class="t" style="left:288px;top:579px;width:50px;text-align:center;font-size:12px;transform:scaleX(0.9)">0,000</div>
<div class="t" style="left:341px;top:579px;font-size:12px;color:#000;font-weight:normal;transform:scaleX(0.88);transform-origin:0 0;">ohm</div>
<div class="t" style="left:397px;top:579px;font-size:12px;color:#000;font-weight:normal;transform:scaleX(0.88);transform-origin:0 0;">Sd:</div>
<div class="a" style="left:428px;top:578px;width:50px;height:14px;background:#ece9d8;border-top:1px solid #a8a598;border-left:1px solid #a8a598;border-bottom:1px solid #fff;border-right:1px solid #fff"></div>
<div class="t" style="left:428px;top:579px;width:50px;text-align:center;font-size:12px;transform:scaleX(0.9)">207,0</div>
<div class="t" style="left:481px;top:579px;font-size:12px;color:#000;font-weight:normal;transform:scaleX(0.88);transform-origin:0 0;">cm^2</div>
</body></html>
